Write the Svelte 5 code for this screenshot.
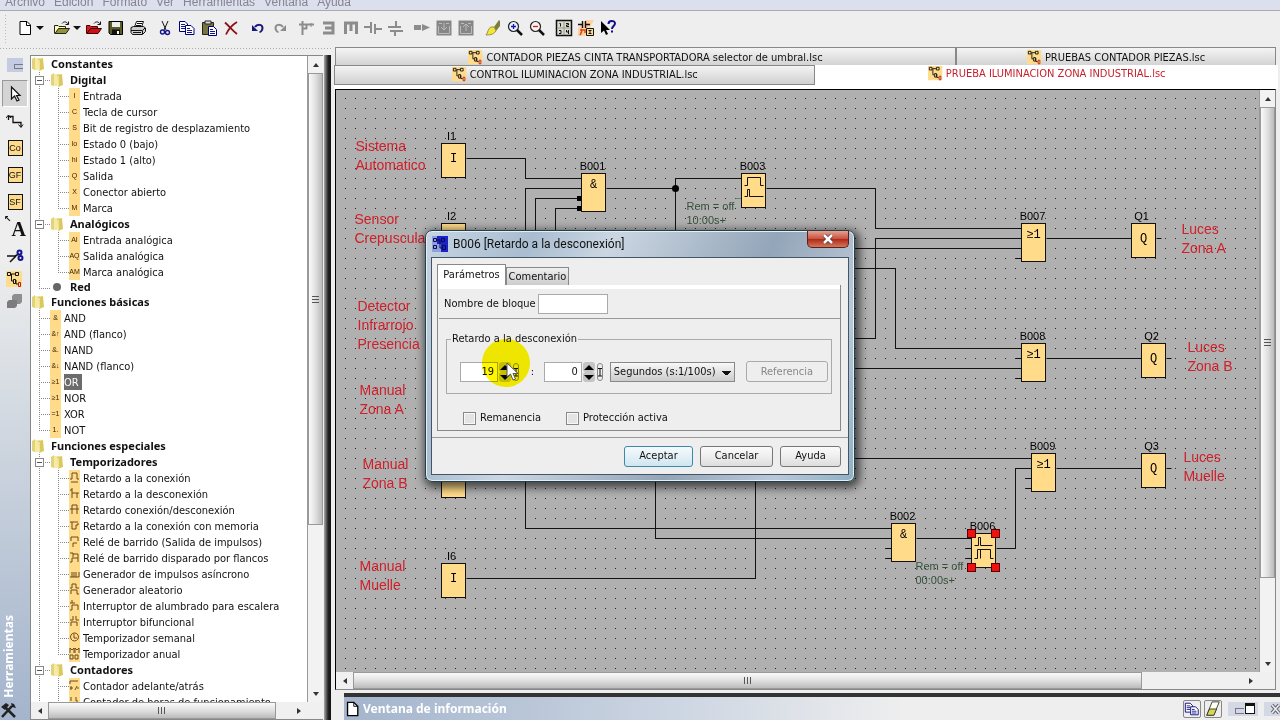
<script lang="ts">
  // LOGO! style ladder editor: tool strip, block tree, diagram canvas and the
  // parameter dialog of the selected block.

  type Row = { label: string; level: number; kind: 'folder' | 'leaf' | 'dot'; glyph?: string; last?: boolean; open?: boolean; shape?: string };

  const menus = ['Archivo', 'Edición', 'Formato', 'Ver', 'Herramientas', 'Ventana', 'Ayuda'];

  const leaf = (level: number, label: string, glyph: string, last = false): Row => ({ level, label, glyph, last, kind: 'leaf' });
  const timer = (label: string, shape: string, last = false): Row => ({ level: 2, label, shape, last, kind: 'leaf' });

  const rows: Row[] = [
    { label: 'Constantes', level: 0, kind: 'folder' },
    { label: 'Digital', level: 1, kind: 'folder', open: true },
    leaf(2, 'Entrada', 'I'),
    leaf(2, 'Tecla de cursor', 'C'),
    leaf(2, 'Bit de registro de desplazamiento', 'S'),
    leaf(2, 'Estado 0 (bajo)', 'lo'),
    leaf(2, 'Estado 1 (alto)', 'hi'),
    leaf(2, 'Salida', 'Q'),
    leaf(2, 'Conector abierto', 'X'),
    leaf(2, 'Marca', 'M', true),
    { label: 'Analógicos', level: 1, kind: 'folder', open: true },
    leaf(2, 'Entrada analógica', 'AI'),
    leaf(2, 'Salida analógica', 'AQ'),
    leaf(2, 'Marca analógica', 'AM', true),
    { label: 'Red', level: 1, kind: 'dot', last: true },
    { label: 'Funciones básicas', level: 0, kind: 'folder' },
    leaf(1, 'AND', '&'),
    leaf(1, 'AND (flanco)', '&↑'),
    leaf(1, 'NAND', '&.'),
    leaf(1, 'NAND (flanco)', '&↓'),
    leaf(1, 'OR', '≥1'),
    leaf(1, 'NOR', '≥1'),
    leaf(1, 'XOR', '=1'),
    leaf(1, 'NOT', '1.', true),
    { label: 'Funciones especiales', level: 0, kind: 'folder' },
    { label: 'Temporizadores', level: 1, kind: 'folder', open: true },
    timer('Retardo a la conexión', 'M1 9H3V3H8V9H10M2 12H9'),
    timer('Retardo a la desconexión', 'M1 4H3V2M3 4V7H10M3 12V7M8 7V12'),
    timer('Retardo conexión/desconexión', 'M3 7V3H8V7M1 7H10M3 12V7M8 7V12'),
    timer('Retardo a la conexión con memoria', 'M1 4H9M3 4V11H7V7H9V5'),
    timer('Relé de barrido (Salida de impulsos)', 'M2 7V3H9V7M4 13V9H8'),
    timer('Relé de barrido disparado por flancos', 'M1 3H4V7M4 4H9V8M1 12H3V8H9V12'),
    timer('Generador de impulsos asíncrono', 'M1 11H3V6M3 11H5V6M5 11H7V6M7 11H10V6'),
    timer('Generador aleatorio', 'M1 6H3V2H7V6H10M2 12V8H8V12H10'),
    timer('Interruptor de alumbrado para escalera', 'M1 5H3V2M3 5H6M1 12H3V7H9V12'),
    timer('Interruptor bifuncional', 'M1 6H4V2M7 6V2M7 6H10M2 12V8H8V12'),
    timer('Temporizador semanal', 'M5 3A4 4 0 1 0 6 3ZM5 4V8H8'),
    timer('Temporizador anual', 'M1 7V2L3 4L5 2V7M6 7V2L8 4L10 2V7M1 9V13H4V9ZM6 9V13H9V9Z', true),
    { label: 'Contadores', level: 1, kind: 'folder', open: true },
    timer('Contador adelante/atrás', 'M1 6V3H9M1 10H4M2 8V12M6 12L8 8M8 10H10'),
    timer('Contador de horas de funcionamiento', 'M2 7V3M7 3V7H9'),
  ];

  // Each drawing sits in an 18x18 box.
  const art: Record<string, string> = {
    new: '<path d="M4 2.500H11L14.500 6V15.500H4Z" fill="#fff" stroke="#000"/><path d="M10.500 3V6.500H14" fill="none" stroke="#000"/>',
    open: '<path d="M1.500 14.500V6.500H5L6 7.500H12.500V10" fill="#ffffb0" stroke="#222"/><path d="M2 14.500L5.500 9.500H16.500L13 14.500Z" fill="#929236" stroke="#222"/><path d="M9 4.500C11 2 14 2.500 15 5.500M15.500 2.500V5.500H12.500" fill="none" stroke="#111"/>',
    shut: '<path d="M1.500 14.500V6.500H5L6 7.500H12.500V10" fill="#d02024" stroke="#500"/><path d="M2 14.500L5.500 9.500H16.500L13 14.500Z" fill="#d01018" stroke="#400"/><path d="M9 4.500C11 2 14 2.500 15 5.500M15.500 2.500V5.500H12.500" fill="none" stroke="#111"/>',
    save: '<path d="M2 2.500H15.500V15.500H3.500L2 14Z" fill="#5c5c28" stroke="#000"/><path d="M5 3H13V8H5Z" fill="#eee"/><path d="M5 10.500H13V15H5Z" fill="#111"/><path d="M10 12H12V15H10Z" fill="#fff"/>',
    print: '<path d="M5.500 8L7.500 2.500H14.500L12.500 8" fill="#fff" stroke="#111"/><path d="M2 8.500L4.500 7.500H14.500L16.500 9V12.500L13.500 15.500H3.500L2 13.500Z" fill="#ccc" stroke="#111"/><path d="M2 11.500H13.500L16 9M8 4.500H13M7 6.500H12M4 13.500H12M13.500 12V15" fill="none" stroke="#111"/>',
    cut: '<path d="M6 2L10 11M12 2L8 11" stroke="#111" fill="none"/><circle cx="6.500" cy="13" r="2" fill="none" stroke="#14148c" stroke-width="1.400"/><circle cx="11.500" cy="13.500" r="2" fill="none" stroke="#14148c" stroke-width="1.400"/>',
    copy: '<path d="M1.500 2.500H7L9.500 5V12.500H1.500Z" fill="#fff" stroke="#000078"/><path d="M7.500 6.500H13L16 9.500V15.500H7.500Z" fill="#fff" stroke="#000078"/><path d="M3 5.500H7M3 7.500H7M3 9.500H7M9 9.500H12M9 11.500H14M9 13.500H14" stroke="#14148c"/>',
    paste: '<path d="M2.500 3.500H13.500V15.500H2.500Z" fill="#76763e" stroke="#222"/><path d="M5 2H11V5H5Z" fill="#ddd" stroke="#222"/><path d="M8.500 7.500H13.500L16.500 10.500V16.500H8.500Z" fill="#fff" stroke="#000078"/><path d="M10 10.500H13M10 12.500H15M10 14.500H15" stroke="#14148c"/>',
    del: '<path d="M3 3.500C8 8 11 12 15 15M15 3C10 6 6 11 4 15.500" fill="none" stroke="#8c1018" stroke-width="1.800"/>',
    undo: '<path d="M6 8C8 5 13.500 5 13.500 9C13.500 11 12 13 10.500 13" fill="none" stroke="#181878" stroke-width="2"/><path d="M3 6V12H9Z" fill="#181878"/>',
    redo: '<path d="M12 8C10 5 4.500 5 4.500 9C4.500 11 6 13 7.500 13" fill="none" stroke="#8c8c8c" stroke-width="2"/><path d="M15 6V12H9Z" fill="#8c8c8c"/>',
    al1: '<path d="M4.500 2V16M1 5.500H16M8.500 5V10M4 9.500H9" stroke="#8c8c8c" stroke-width="2" fill="none"/><path d="M13 4V8" stroke="#8c8c8c"/>',
    al2: '<path d="M3 4H13V14H3M5 9H13" stroke="#8c8c8c" stroke-width="3" fill="none"/>',
    al3: '<path d="M3.500 15V4H14.500V15M9 4V12" stroke="#8c8c8c" stroke-width="3" fill="none"/>',
    al4: '<path d="M0 8H6M12 10H18" stroke="#8c8c8c" stroke-width="2"/><path d="M7 3V14M11 5V15" stroke="#8c8c8c" stroke-width="2"/>',
    al5: '<path d="M2 8H15M4 12H17" stroke="#8c8c8c" stroke-width="2"/><path d="M10 2V7M9 13V17" stroke="#8c8c8c" stroke-width="2"/>',
    step: '<path d="M1 6H8V11H1ZM9 5L17 8.500L9 12Z" fill="#8c8c8c"/>',
    down: '<path d="M1.500 1.500H16.500V16.500H1.500Z" fill="#868686"/><path d="M4 4.500H7M11 4.500H14M3.500 7V14.500H14.500V7" fill="none" stroke="#bbb"/><path d="M9 4V10M6 8L9 11L12 8" fill="none" stroke="#bbb"/>',
    up: '<path d="M1.500 1.500H16.500V16.500H1.500Z" fill="#868686"/><path d="M4 4.500H7M11 4.500H14M3.500 7V14.500H14.500V7" fill="none" stroke="#bbb"/><path d="M9 12V5M6 8L9 5L12 8" fill="none" stroke="#bbb"/>',
    brush: '<path d="M10 8L15 1L16 2V7L12 12Z" fill="#7d7d38"/><path d="M10 8L12 12C9 16 5 16 2 16C4 14 4 9 7 8Z" fill="#f5e43c" stroke="#9a9440"/>',
    zin: '<circle cx="7.500" cy="7.500" r="5" fill="#e9f0ff" stroke="#222" stroke-width="1.200"/><path d="M11 11L16 16" stroke="#111" stroke-width="2.500"/><path d="M5 7.500H10M7.500 5V10" stroke="#1414aa" stroke-width="1.300"/>',
    zout: '<circle cx="7.500" cy="7.500" r="5" fill="#fff0f0" stroke="#222" stroke-width="1.200"/><path d="M11 11L16 16" stroke="#111" stroke-width="2.500"/><path d="M5 7.500H10" stroke="#b42828" stroke-width="1.300"/>',
    pages: '<path d="M1.500 1.500H16.500V16.500H1.500Z" fill="#d8dccc" stroke="#111" stroke-width="1.500"/><path d="M9 2V16M2 9H16" stroke="#999"/><path d="M4.500 4.500H5.500V7.500M11 4.500H13.500V6H11.500V7.500H14M4 11.500H6V14.500H4M11.500 11V13H14M13.500 11V15" stroke="#111" fill="none"/>',
    conv: '<path d="M9 1H17L8 17H1V9Z" fill="#ffd0a0"/><path d="M1 5.500H5M5.500 2V9M8.500 2V9M9 5.500H13" stroke="#111" stroke-width="1.400"/><path d="M3 16C4 14 6 12 4 10M3 11H8V14" stroke="#d04a20" fill="none" stroke-width="1.500"/><path d="M9.500 9.500H16.500V16.500H9.500Z" fill="#ffdb8a" stroke="#111"/><path d="M13 11V15M11.500 11.500H14.500M11.500 14.500H14.500" stroke="#111"/>',
    help: '<path d="M2 2V14L5 11.500L7 16L9 15L7 11H11Z" fill="#000"/><path d="M9.500 5C9.500 1 16 1 16 4.500C16 7 13 7 13 10" fill="none" stroke="#10108c" stroke-width="2"/><path d="M12 11.500H14V13.500H12Z" fill="#10108c"/>',
    net: '<path d="M0 0H16V16H0Z" fill="#ffdc8c"/><path d="M1.500 1.500H4.500V4.500H1.500ZM9.500 1.500H12.500V4.500H9.500ZM5 3H9M5.500 3V10H7M7.500 8.500H9.500V12.500H7.500ZM10 9V13H12" fill="none" stroke="#111"/><path d="M12.500 11.500H14.500V15.500H12.500Z" fill="none" stroke="#b41e1e"/>',
    pointer: '<path d="M5.500 2V14L8.500 11L11 16L13 15L10.500 10.500H14Z" fill="#fff" stroke="#111" stroke-width="1.200"/>',
    wire: '<path d="M2.500 8V4.500H7V10.500H15V15" fill="none" stroke="#111" stroke-width="1.300"/><path d="M0 6L2.500 3L5 6M12.500 12.500L15 15.500L17 12.500" fill="none" stroke="#111"/>',
    scis: '<path d="M1 9H9L13 7M4 15L10 9" stroke="#111" fill="none" stroke-width="1.500"/><circle cx="13.500" cy="5.500" r="2" fill="none" stroke="#14148c" stroke-width="2"/><circle cx="14.500" cy="11" r="2" fill="none" stroke="#14148c" stroke-width="2"/>',
    cubes: '<path d="M6 3L8 1H16V9L14 11H6Z" fill="#8e8e8e"/><path d="M1 9L3 7H11V13L9 15H1Z" fill="#7c7c7c"/>',
    tools: '<path d="M2 15L12 4M4 4L15 15" stroke="#222" stroke-width="2.500"/><path d="M1 5L6 1L9 3L5 8ZM11 1L12 5L16 6L14 2Z" fill="#222"/>',
    doc: '<path d="M4 1.500H11L15.500 6V16.500H4Z" fill="#fff" stroke="#000" stroke-width="1.500"/><path d="M11 2V6H15" fill="none" stroke="#000"/>',
    eraser: '<path d="M8 1H16L10 16H2Z" fill="#fffff0" stroke="#333"/><path d="M5 9H13L10 16H2Z" fill="#d8d850" stroke="#333"/>',
  };

  const toolGroups = [
    ['save', 'print'],
    ['cut', 'copy', 'paste', 'del'],
    ['undo', 'redo'],
    ['al1', 'al2', 'al3', 'al4', 'al5'],
    ['step', 'down', 'up'],
    ['brush', 'zin', 'zout'],
    ['pages', 'conv', 'help'],
  ];

  // Diagram, in canvas units; the grid pitch is 10.
  type Block = { x: number; y: number; id: string; kind: 'I' | 'Q' | '&' | '≥1' | 'pulse' | 'delay' };
  const blocks: Block[] = [
    { x: 106, y: 55, id: 'I1', kind: 'I' },
    { x: 106, y: 135, id: 'I2', kind: 'I' },
    { x: 106, y: 375, id: 'I5', kind: 'I' },
    { x: 106, y: 475, id: 'I6', kind: 'I' },
    { x: 246, y: 85, id: 'B001', kind: '&' },
    { x: 406, y: 85, id: 'B003', kind: 'pulse' },
    { x: 686, y: 135, id: 'B007', kind: '≥1' },
    { x: 686, y: 255, id: 'B008', kind: '≥1' },
    { x: 696, y: 365, id: 'B009', kind: '≥1' },
    { x: 556, y: 435, id: 'B002', kind: '&' },
    { x: 636, y: 445, id: 'B006', kind: 'delay' },
    { x: 796, y: 135, id: 'Q1', kind: 'Q' },
    { x: 806, y: 255, id: 'Q2', kind: 'Q' },
    { x: 806, y: 365, id: 'Q3', kind: 'Q' },
  ];
  const heightOf = (b: Block) => (b.kind === '&' || b.kind === '≥1' ? 38 : 34);

  const wires = [
    'M131 70H190V90H246', 'M190 150V100H246', 'M200 150V110H242', 'M220 150V120H242',
    'M271 100H340M340 150V90H406', 'M431 100H540V140H686', 'M520 250H540V150H686',
    'M500 160H686M680 170H686', 'M500 180H560V260H686', 'M500 280H686M680 270H686M680 290H686',
    'M711 150H796M821 150H826', 'M711 270H806M831 270H836', 'M500 370H696M690 390H696M690 400H696',
    'M721 380H806M831 380H836', 'M661 460H680V380H696', 'M581 450H636M630 460H636M630 470H636',
    'M190 380V440H556', 'M320 380V450H556M550 460H556M550 470H556', 'M131 490H420V380',
  ];
  const notes = [
    { x: 20, y: 62, lines: ['Sistema', 'Automatico'] },
    { x: 19, y: 135, lines: ['Sensor', 'Crepuscular'] },
    { x: 22, y: 222, lines: ['Detector', 'Infrarrojo', 'Presencia'] },
    { x: 24, y: 306, lines: ['Manual', 'Zona A'] },
    { x: 27, y: 380, lines: ['Manual', 'Zona B'] },
    { x: 24, y: 482, lines: ['Manual', 'Muelle'] },
    { x: 846, y: 145, lines: ['Luces', 'Zona A'] },
    { x: 852, y: 263, lines: ['Luces', 'Zona B'] },
    { x: 848, y: 373, lines: ['Luces', 'Muelle'] },
  ];
  const handles = [[636, 445], [660, 445], [636, 479], [660, 479]];

  let blockName = $state('');
  let seconds = $state('19');
  let hundredths = $state('0');
  let unit = $state('s');
  let retain = $state(false);
  let protect = $state(false);
</script>

{#snippet icon(name: string)}
  <svg class="ico" viewBox="0 0 18 18" aria-hidden="true">{@html art[name]}</svg>
{/snippet}

{#snippet arrow(d: string)}
  <button type="button" class="arr" aria-label="Desplazar"><svg width="8" height="8" viewBox="0 0 8 8"><path {d} fill="#333" /></svg></button>
{/snippet}

{#snippet folder()}
  <svg class="folder" viewBox="0 0 14 16" aria-hidden="true">
    <path d="M1 3L4 1V14L1 13Z" fill="#e2d27a" />
    <path d="M4 2H9V14H4Z" fill="#f4eaa6" />
    <path d="M7 3L12 2L13 13L8 15Z" fill="#dcc85c" />
    <path d="M8 4V14" stroke="#fff9d0" />
  </svg>
{/snippet}

{#snippet spinner(name: string)}
  <span class="spin">
    <button type="button" aria-label="{name} más"><svg width="12" height="10" viewBox="0 0 12 10"><path d="M1 8L6 3L11 8Z" /></svg></button>
    <button type="button" aria-label="{name} menos"><svg width="12" height="10" viewBox="0 0 12 10"><path d="M1 3L6 8L11 3Z" /></svg></button>
  </span>
  <button type="button" class="reset" aria-label="{name} referencia"><svg width="4" height="16" viewBox="0 0 4 16"><path d="M0 4.500H4M2 4V12M0 12H4" stroke="#111" fill="none" /></svg></button>
{/snippet}

<div class="app">
  <nav class="menubar">
    {#each menus as m (m)}<a href="#{m}">{m}</a>{/each}
  </nav>

  <div class="toolbar">
    <div class="group">
      <button type="button" class="tb" aria-label="new">{@render icon('new')}</button><span class="caret"></span>
    </div>
    <div class="group">
      <button type="button" class="tb" aria-label="open">{@render icon('open')}</button><span class="caret"></span>
      <button type="button" class="tb" aria-label="shut">{@render icon('shut')}</button>
      {#each toolGroups[0] as t (t)}<button type="button" class="tb" aria-label={t}>{@render icon(t)}</button>{/each}
    </div>
    {#each toolGroups.slice(1) as g}
      <div class="group">
        {#each g as t (t)}<button type="button" class="tb" aria-label={t}>{@render icon(t)}</button>{/each}
      </div>
    {/each}
  </div>

  <div class="main">
    <aside class="left">
      <div class="side">
        <div class="mini"></div>
        <button type="button" class="st on" aria-label="Selección">{@render icon('pointer')}</button>
        <button type="button" class="st" aria-label="Conectar">{@render icon('wire')}</button>
        <button type="button" class="st"><span class="chip">Co</span></button>
        <button type="button" class="st"><span class="chip">GF</span></button>
        <button type="button" class="st"><span class="chip">SF</span></button>
        <button type="button" class="st letter"><span>↖</span>A</button>
        <button type="button" class="st" aria-label="Cortar">{@render icon('scis')}</button>
        <button type="button" class="st short" aria-label="Simular">{@render icon('net')}</button>
        <button type="button" class="st short" aria-label="Test">{@render icon('cubes')}</button>
        <span class="vtitle">Herramientas</span>
        {@render icon('tools')}
      </div>
      <div class="treebox">
        <div class="treerow">
          <ul class="tree">
            {#each rows as r}
              <li class:bold={r.kind !== 'leaf'} class:low={r.kind === 'dot'}>
                {#if r.level === 2}<span class="guide pass"></span>{/if}
                {#if r.level > 0}
                  <span class="guide branch" class:last={r.last}>{#if r.open}<i class="minus"></i>{/if}</span>
                {/if}
                {#if r.kind === 'folder'}
                  {@render folder()}
                {:else if r.kind === 'dot'}
                  <span class="bullet"></span>
                {:else}
                  <span class="tile">
                    {#if r.shape}<svg width="11" height="16" viewBox="0 0 11 16"><path d={r.shape} fill="none" stroke="#6b4a1c" /></svg>{:else}{r.glyph}{/if}
                  </span>
                {/if}
                <span class="name" class:sel={r.label === 'OR'}>{r.label}</span>
              </li>
            {/each}
          </ul>
          <div class="vbar">
            {@render arrow('M1 6L4 2L7 6Z')}
            <div class="thumb tree-v"><i></i></div>
            <span class="grow"></span>
            {@render arrow('M1 2L4 6L7 2Z')}
          </div>
        </div>
        <div class="hbar">
          {@render arrow('M6 1L2 4L6 7Z')}
          <div class="thumb tree-h"><i></i></div>
          <span class="grow"></span>
          {@render arrow('M2 1L6 4L2 7Z')}
          <span class="corner"></span>
        </div>
      </div>
      <div class="split"></div>
    </aside>

    <section class="right">
      <div class="tabs">
        <button type="button" class="tab wide">{@render icon('net')}CONTADOR PIEZAS CINTA TRANSPORTADORA selector de umbral.lsc</button>
        <button type="button" class="tab">{@render icon('net')}PRUEBAS CONTADOR PIEZAS.lsc</button>
      </div>
      <div class="tabs second">
        <button type="button" class="tab half">{@render icon('net')}CONTROL ILUMINACION ZONA INDUSTRIAL.lsc</button>
        <button type="button" class="tab current">{@render icon('net')}PRUEBA ILUMINACION ZONA INDUSTRIAL.lsc</button>
      </div>
      <div class="work">
        <div class="canvasrow">
          <svg class="canvas" aria-label="Diagrama">
            <defs>
              <pattern id="grid" width="10" height="10" patternUnits="userSpaceOnUse" x="9" y="8">
                <rect width="1" height="1" fill="#222" />
              </pattern>
            </defs>
            <rect width="100%" height="100%" fill="#b0b0b0" />
            <rect width="100%" height="100%" fill="url(#grid)" />
            <g transform="translate(-.5 -1.5)">
              {#each wires as d}<path class="wire" {d} />{/each}
              <path class="wire faint" d="M400 110H406" />
              <circle cx="340" cy="100" r="3.500" />
              <path d="M241.500 107.500H246V112.500H241.500ZM241.500 117.500H246V122.500H241.500Z" />
              {#each blocks as b (b.id)}
                <g transform="translate({b.x} {b.y})">
                  <rect class="block" width="24" height={heightOf(b)} />
                  <text class="id" x={b.id.length > 2 ? 11 : 10} y="-4">{b.id}</text>
                  {#if b.kind === 'pulse'}
                    <path class="wire" d="M3 12H6V4H19V12H22M3 23H6V16H8V23H22" />
                  {:else if b.kind === 'delay'}
                    <path class="wire" d="M3 12H7V4H9V12H21M3 25H6V16H19V25H22M9 16V25" />
                  {:else}
                    <text class="sym" x="12" y={b.kind === 'I' || b.kind === 'Q' ? 18 : 14}>{b.kind}</text>
                  {/if}
                </g>
              {/each}
              {#each handles as [x, y]}<rect class="handle" x={x - 4} y={y - 4} width="8" height="8" />{/each}
              <text class="param" x="351" y="121">Rem = off</text>
              <text class="param" x="351" y="135">10:00s+</text>
              <text class="param" x="580" y="481">Rem = off</text>
              <text class="param" x="580" y="495">00:00s+</text>
              {#each notes as n}
                {#each n.lines as line, i}<text class="note" x={n.x} y={n.y + i * 19}>{line}</text>{/each}
              {/each}
            </g>
          </svg>
          <div class="vbar">
            {@render arrow('M1 6L4 2L7 6Z')}
            <div class="thumb work-v"><i></i></div>
            <span class="grow"></span>
            {@render arrow('M1 2L4 6L7 2Z')}
          </div>
        </div>
        <div class="hbar">
          {@render arrow('M6 1L2 4L6 7Z')}
          <div class="thumb work-h"><i></i></div>
          <span class="grow"></span>
          {@render arrow('M2 1L6 4L2 7Z')}
          <span class="corner"></span>
        </div>
      </div>
      <footer class="info">
        {@render icon('doc')}
        <strong>Ventana de información</strong>
        <button type="button" aria-label="Copiar">{@render icon('copy')}</button>
        <button type="button" aria-label="Borrar">{@render icon('eraser')}</button>
        <span class="win"><i class="w1"></i><i class="w2"></i></span>
        <svg class="win x" viewBox="0 0 16 14" aria-hidden="true"><path d="M8 3L15 11M15 3L8 11" stroke="#667" stroke-width="3.500" /><path d="M8 3L15 11M15 3L8 11" stroke="#eee" stroke-width="1.500" /></svg>
      </footer>
    </section>
  </div>

  <div class="dialog" role="dialog" aria-labelledby="dlg-title">
    <header>
      <svg class="dlgicon" viewBox="0 0 16 16" aria-hidden="true">
        <path d="M0 0H16V16H0Z" fill="#8fa0dc" /><path d="M5 0H16V16H9V8H5Z" fill="#1a22c8" />
        <path d="M1.500 2.500H4.500V5.500H1.500ZM1.500 9.500H4.500V12.500H1.500ZM5 4H8V12H10M9.500 2.500H12.500V5.500H9.500ZM10.500 9.500H13.500V13.500H10.500Z" fill="none" stroke="#0a0a50" />
      </svg>
      <h2 id="dlg-title">B006 [Retardo a la desconexión]</h2>
      <button type="button" class="close" aria-label="Cerrar"><svg width="12" height="10" viewBox="0 0 12 10"><path d="M2 1L10 9M10 1L2 9" stroke="#5a3030" stroke-width="4" /><path d="M2 1L10 9M10 1L2 9" stroke="#fff" stroke-width="2.500" /></svg></button>
    </header>
    <form class="body" onsubmit={(e) => e.preventDefault()}>
      <div class="dtabs">
        <button type="button" class="dtab now">Parámetros</button>
        <button type="button" class="dtab">Comentario</button>
      </div>
      <div class="pane">
        <div class="namerow">
          <label for="bname">Nombre de bloque</label>
          <input id="bname" class="text" bind:value={blockName} />
        </div>
        <fieldset>
          <legend>Retardo a la desconexión</legend>
          <input class="num" aria-label="Segundos" bind:value={seconds} />
          {@render spinner('Segundos')}
          <span class="colon">:</span>
          <input class="num" aria-label="Centésimas" bind:value={hundredths} />
          {@render spinner('Centésimas')}
          <select aria-label="Unidad" bind:value={unit}>
            <option value="s">Segundos (s:1/100s)</option>
            <option value="m">Minutos (m:s)</option>
            <option value="h">Horas (h:m)</option>
          </select>
          <button type="button" class="btn ref" disabled>Referencia</button>
        </fieldset>
        <div class="checks">
          <label><input type="checkbox" bind:checked={retain} />Remanencia</label>
          <label><input type="checkbox" bind:checked={protect} />Protección activa</label>
        </div>
      </div>
      <div class="actions">
        <button type="submit" class="btn ok">Aceptar</button>
        <button type="button" class="btn cancel">Cancelar</button>
        <button type="button" class="btn">Ayuda</button>
      </div>
    </form>
  </div>

  <div class="halo"></div>
  <svg class="mouse" viewBox="0 0 14 20" aria-hidden="true"><path d="M1 1V15L4.500 12L7 18L9.500 17L7 11.500H12Z" fill="#fff" stroke="#555" /></svg>
</div>

<style>
  :global(body) { margin: 0; overflow: hidden; }
  .app {
    position: relative;
    display: flex;
    flex-direction: column;
    height: 100vh;
    overflow: hidden;
    background: #eee;
    color: #111;
    font: 11px/16px "DejaVu Sans Condensed", "Noto Sans", sans-serif;
  }
  button, input, select { font: inherit; color: inherit; padding: 0; margin: 0; border: 0; background: none; box-sizing: border-box; }
  .ico { width: 18px; height: 18px; flex: none; }
  .grow { flex: 1; }

  .menubar {
    display: flex;
    align-items: flex-end;
    gap: 9px;
    height: 10px;
    padding-left: 5px;
    overflow: hidden;
    flex: none;
    background: #dcdfee;
    border-bottom: 1px solid #aaa;
    font: 12px/16px "Liberation Sans", sans-serif;
  }
  .menubar a { color: #858590; text-decoration: none; }

  .toolbar {
    display: flex;
    align-items: center;
    gap: 5px;
    height: 34px;
    padding: 0 0 2px 14px;
    flex: none;
    background: repeating-linear-gradient(#bbb 0 1px, transparent 1px 3px) 5px 4px / 1px 28px no-repeat;
  }
  .group { display: flex; align-items: center; }
  .tb { display: flex; justify-content: center; width: 22px; }
  .caret { width: 0; margin-right: 2px; border: 4px solid transparent; border-top-color: #111; border-bottom: 0; }

  .main { display: flex; flex: 1; min-height: 0; }
  .left {
    display: flex;
    flex: none;
    width: 333px;
    box-sizing: border-box;
    padding-top: 8px;
    background: repeating-linear-gradient(90deg, #aaa 0 1px, transparent 1px 3px) 0 1px / 100% 1px no-repeat;
  }
  .side {
    display: flex;
    flex-direction: column;
    align-items: center;
    width: 30px;
    background: linear-gradient(#eee 30%, #ccd4de 60%, #a3b4cc);
  }
  .mini { width: 16px; height: 14px; margin: 3px 0 8px; background: linear-gradient(#778, #778) 7px 6px / 9px 1px no-repeat, linear-gradient(#778, #778) 7px 10px / 9px 1px no-repeat, linear-gradient(#778, #778) 7px 6px / 1px 5px no-repeat, #c3cce0; flex: none; }
  .st { display: flex; align-items: center; justify-content: center; width: 26px; height: 27px; flex: none; }
  .st.on { background: #d4d4d4; border: 1px solid #999; border-right-color: #fff; border-bottom-color: #fff; }
  .st.short { height: 22px; }
  .chip { width: 13px; height: 14px; border: 1px solid #111; background: #ffd98a; font: 9px/14px "Liberation Sans", sans-serif; }
  .letter { font: bold 20px/20px "Liberation Serif", serif; }
  .letter span { font: bold 9px/9px "DejaVu Sans", sans-serif; align-self: flex-start; }
  .vtitle { margin-top: auto; writing-mode: vertical-rl; rotate: 180deg; align-self: flex-start; font: bold 12px/18px "Noto Sans", sans-serif; color: #fff; }
  .side > .ico { margin: 4px 8px 0 0; align-self: flex-start; }

  .treebox { display: flex; flex-direction: column; flex: 1; min-width: 0; border: 1px solid #888; border-right: 0; }
  .treerow { display: flex; flex: 1; min-height: 0; }
  .tree { flex: 1; min-width: 0; margin: 0; padding: 0; list-style: none; overflow: hidden; background: #fff; }
  li { display: flex; height: 16px; line-height: 18px; white-space: nowrap; }
  li.bold { font: bold 11px/16px "Noto Sans", sans-serif; }
  li.low { height: 14px; line-height: 14px; }
  .folder { width: 14px; height: 16px; margin-right: 6px; flex: none; }
  .guide { display: flex; align-items: center; width: 19px; flex: none; background-repeat: no-repeat; }
  .pass { background: repeating-linear-gradient(#888 0 1px, transparent 1px 2px) 8px 0 / 1px 100% no-repeat; }
  .branch {
    background:
      repeating-linear-gradient(#888 0 1px, transparent 1px 2px) 8px 0 / 1px 100% no-repeat,
      repeating-linear-gradient(90deg, #888 0 1px, transparent 1px 2px) 8px 8px / 11px 1px no-repeat;
  }
  .branch.last { background-size: 1px 8px, 11px 1px; }
  .minus { width: 7px; height: 7px; margin-left: 4px; border: 1px solid #888; background: linear-gradient(#555, #555) 1px 3px / 5px 1px no-repeat, #fff; }
  .bullet { width: 8px; height: 8px; margin: 3px 9px 0 3px; border-radius: 50%; background: #666; }
  .tile { width: 11px; height: 16px; margin-right: 3px; background: #ffdb8a; font: 7px/15px "Liberation Sans", sans-serif; text-align: center; flex: none; color: #3a2408; }
  .sel { background: #6c6c6c; color: #fff; padding-right: 3px; }

  .vbar { display: flex; flex-direction: column; width: 15px; flex: none; background: #f2f2f2; border-left: 1px solid #999; }
  .hbar { display: flex; height: 17px; flex: none; background: #f0f0f0; }
  .arr { display: flex; align-items: center; justify-content: center; width: 17px; height: 17px; flex: none; }
  .vbar .arr { width: 15px; }
  .corner { width: 16px; }
  .thumb { display: flex; align-items: center; justify-content: center; box-sizing: border-box; border: 1px solid #999; }
  .vbar .thumb { background: linear-gradient(90deg, #fafafa, #e0e0e0 50%, #bbb); }
  .hbar .thumb { background: linear-gradient(#fafafa, #e0e0e0 50%, #bbb); }
  .vbar i { width: 7px; height: 7px; background: repeating-linear-gradient(#555 0 1px, transparent 1px 3px); }
  .hbar i { width: 7px; height: 7px; background: repeating-linear-gradient(90deg, #555 0 1px, transparent 1px 3px); }
  .tree-v { height: 70%; }
  .tree-h { width: 78%; }
  .work-v { height: 81%; }
  .work-h { width: 84%; }

  .split { width: 7px; margin: 0 2px 0 1px; background: linear-gradient(90deg, #aaa, #222 60%, #111); flex: none; }

  .right { display: flex; flex-direction: column; flex: 1; min-width: 0; }
  .tabs { display: flex; height: 18px; flex: none; margin: 0 4px 0 2px; overflow: hidden; }
  .tab {
    display: flex;
    justify-content: center;
    align-items: center;
    gap: 2px;
    flex: 1 1 0;
    height: 20px;
    white-space: nowrap;
    border: 1px solid #888;
    border-bottom: 0;
    background: linear-gradient(#f4f4f4, #d0d0d0);
  }
  .tab.wide { flex: 0 0 66%; }
  .tab.half { flex: 0 0 51%; }
  .tab .ico { width: 16px; height: 16px; }
  .tabs.second { height: 24px; margin: 0 2px 0 1px; background: #fff; }
  .second .tab { border-bottom: 1px solid #888; }
  .second .current { height: 18px; border: 0; background: #fff; color: #c8202c; }

  .work { display: flex; flex-direction: column; flex: 1; min-height: 0; margin: 0 4px 0 2px; border-top: 1px solid #000; border-left: 1px solid #000; border-bottom: 1px solid #888; border-right: 1px solid #888; }
  .canvasrow { display: flex; flex: 1; min-height: 0; }
  .canvas { flex: 1; min-width: 0; height: 100%; }
  .wire { fill: none; stroke: #111; stroke-width: 1; }
  .faint { stroke: #6c806c; }
  .block { fill: #ffdb8a; stroke: #111; }
  .handle { fill: #f01010; stroke: #500; }
  .id { font: 11px "Liberation Sans", sans-serif; text-anchor: middle; }
  .sym { font: 12px "Liberation Mono", monospace; text-anchor: middle; }
  .param { font: 11px "Liberation Sans", sans-serif; fill: #36503a; }
  .note { font: 14px "Liberation Sans", sans-serif; fill: #d0202c; }

  .info {
    display: flex;
    align-items: center;
    gap: 3px;
    height: 23px;
    margin: 3px 0 0 11px;
    flex: none;
    border-top: 4px solid #333;
    background: linear-gradient(90deg, #a3b4cc, #ccd5e2 35%, #eee 60%);
  }
  .info strong { flex: 1; font: bold 12px/18px "Noto Sans", sans-serif; color: #fff; }
  .info button { display: flex; height: 18px; border: 1px solid #888; border-radius: 2px; }
  .info .ico { width: 16px; height: 16px; }
  .win { display: flex; width: 30px; height: 14px; margin-left: 3px; background: #d3d8e4; align-items: center; }
  .w1 { width: 8px; height: 4px; margin: 4px 1px 0 7px; border: 1px solid #778; border-right: 0; }
  .w2 { width: 8px; height: 7px; border: 1px solid #111; border-top-width: 3px; background: #fff; }
  .win.x { width: 16px; }

  .dialog {
    position: absolute;
    left: 425px;
    top: 230px;
    width: 430px;
    height: 252px;
    box-sizing: border-box;
    display: flex;
    flex-direction: column;
    padding: 0 5px 6px;
    border: 1px solid #24404a;
    border-radius: 7px;
    background: linear-gradient(115deg, #c6d4e2, #a9bdd0 20%, #cbd6e2 35%, #93a5b8 65%, #b9c8d8 85%, #8fb0c4);
    box-shadow: inset 0 0 0 1px #e4eef6, 2px 3px 9px 3px #0009;
  }
  .dialog header { display: flex; align-items: center; height: 26px; flex: none; }
  .dlgicon { width: 16px; height: 16px; margin: 0 5px 0 1px; }
  .dialog h2 { flex: 1; margin: 0; font: 12px/18px Roboto, "Noto Sans", sans-serif; }
  .close { align-self: flex-start; display: flex; align-items: center; justify-content: center; width: 42px; height: 17px; border: 1px solid #5a2020; border-top: 0; border-radius: 0 0 5px 5px; background: linear-gradient(#e8a090, #c8503c 50%, #b02818 51%, #d07858); }
  .body { display: flex; flex-direction: column; flex: 1; background: #eee; border: 1px solid #456; }
  .dtabs { display: flex; align-items: flex-end; height: 27px; padding-left: 5px; flex: none; }
  .dtab { height: 18px; width: 63px; border: 1px solid #888; border-bottom: 0; background: linear-gradient(#f0f0f0, #ccc); }
  .dtab.now { width: 69px; height: 21px; background: #fff; }
  .pane { display: flex; flex-direction: column; height: 146px; box-sizing: border-box; margin: 0 7px 0 5px; border: 1px solid #888; border-top: 0; box-shadow: inset 0 4px 0 #fff; flex: none; }
  .namerow { display: flex; align-items: center; gap: 2px; height: 34px; padding: 4px 0 0 5px; box-sizing: border-box; border-bottom: 1px solid #999; margin-left: 1px; flex: none; }
  .text { width: 70px; height: 20px; border: 1px solid #aaa; background: #fff; }
  fieldset { display: flex; align-items: center; height: 63px; box-sizing: border-box; margin: 12px 8px 0; padding: 14px 3px 0 13px; border: 1px solid #aaa; min-width: 0; flex: none; align-content: flex-start; }
  legend { margin-left: -9px; padding: 0 1px; }
  .num { width: 38px; height: 20px; padding-right: 3px; border: 1px solid #aaa; background: #fff; text-align: right; flex: none; }
  .spin { display: flex; flex-direction: column; margin: 0 2px 0 1px; }
  .spin button { display: flex; width: 12px; height: 10px; border-radius: 3px; background: #c4c4c4; }
  .reset { display: flex; border: 1px solid #888; border-radius: 3px; width: 6px; height: 18px; }
  .colon { width: 25px; padding-left: 2px; box-sizing: border-box; text-align: center; }
  select { appearance: none; width: 125px; height: 20px; margin: 0 11px 0 7px; padding-left: 3px; border: 1px solid #888; background: linear-gradient(#111, #111) 111px 8px / 9px 1px no-repeat, linear-gradient(#111, #111) 112px 9px / 7px 1px no-repeat, linear-gradient(#111, #111) 113px 10px / 5px 1px no-repeat, linear-gradient(#111, #111) 114px 11px / 3px 1px no-repeat, linear-gradient(#f8f8f8, #ccc); flex: none; }
  .btn { width: 61px; height: 21px; border: 1px solid #777; border-radius: 3px; background: linear-gradient(#fafafa, #eee 50%, #ddd); }
  .btn.ref { width: 83px; border-color: #aaa; color: #888; background: #eee; }
  .btn.ok { width: 69px; border: 1px solid #3c88a8; background: linear-gradient(#f4fafc, #e4f0f6 50%, #cfe6f0); }
  .btn.cancel { width: 73px; }
  .checks { display: flex; gap: 25px; padding: 16px 0 0 25px; }
  .checks label { display: flex; align-items: center; gap: 4px; }
  input[type='checkbox'] { appearance: none; width: 13px; height: 13px; border: 1px solid #888; background: #e4e4e4; box-shadow: inset 0 0 0 1px #f8f8f8; }
  .actions { display: flex; align-items: center; justify-content: flex-end; gap: 7px; flex: 1; margin-top: 6px; padding-right: 7px; border-top: 1px solid #999; }

  .halo { position: absolute; left: 482px; top: 339px; width: 48px; height: 48px; border-radius: 50%; background: #fff600; mix-blend-mode: multiply; pointer-events: none; }
  .mouse { position: absolute; left: 506px; top: 362px; width: 14px; height: 20px; pointer-events: none; }
</style>
